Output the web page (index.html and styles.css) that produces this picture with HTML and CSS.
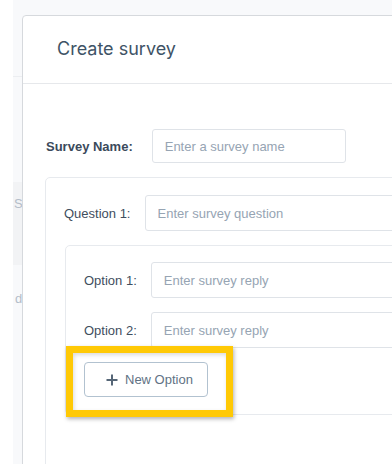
FILE: index.html
```html
<!DOCTYPE html>
<html lang="en">
<head>
    <meta charset="UTF-8">
    <meta name="viewport" content="width=device-width, initial-scale=1.0">
    <title>Create survey</title>
    <link rel="stylesheet" href="styles.css">
</head>
<body>
    <div class="page">
        <div class="page-top"></div>
        <div class="page-block">Surveys</div>
        <div class="page-text">dashboard</div>
    </div>

    <div class="modal">
        <div class="modal-header">
            <h2 class="modal-title">Create survey</h2>
        </div>
        <div class="modal-body">
            <div class="field-row">
                <label class="label-strong" for="surveyName">Survey Name:</label>
                <input type="text" id="surveyName" class="form-control name-input" placeholder="Enter a survey name">
            </div>

            <div class="card question-card">
                <div class="field-row">
                    <label class="label" for="question1">Question 1:</label>
                    <input type="text" id="question1" class="form-control" placeholder="Enter survey question">
                </div>

                <div class="card options-card">
                    <div class="field-row">
                        <label class="label" for="option1">Option 1:</label>
                        <input type="text" id="option1" class="form-control" placeholder="Enter survey reply">
                    </div>
                    <div class="field-row">
                        <label class="label" for="option2">Option 2:</label>
                        <input type="text" id="option2" class="form-control" placeholder="Enter survey reply">
                    </div>
                    <div class="btn-wrap">
                        <button class="btn btn-outline" type="button">
                            <svg class="plus" width="12" height="12" viewBox="0 0 12 12">
                                <path d="M6 0.5v11M0.5 6h11" stroke="currentColor" stroke-width="2" fill="none"/>
                            </svg>
                            New Option
                        </button>
                        <div class="highlight"></div>
                    </div>
                </div>
            </div>
        </div>
    </div>
</body>
</html>
```

FILE: styles.css
```css
* {
    margin: 0;
    padding: 0;
    box-sizing: border-box;
    font-family: 'Liberation Sans', Arial, sans-serif;
}

body {
    background: #ffffff;
    height: 464px;
    overflow: hidden;
}

.page {
    margin-left: 13px;
    height: 464px;
    background: #f8f9fb;
    color: #b4bdc9;
    font-size: 13px;
}

.page-top {
    height: 77px;
    border-bottom: 1px solid #eceef1;
}

.page-block {
    margin-top: 105px;
    height: 83px;
    padding: 14px 0 0 1px;
    background: #f2f3f5;
}

.page-text {
    padding: 26px 0 0 2px;
}

.modal {
    position: fixed;
    top: 15px;
    left: 22px;
    width: 560px;
    height: 560px;
    background: white;
    border: 1px solid #d6d9dd;
    border-radius: 4px;
}

.modal-header {
    height: 68px;
    padding: 22px 0 0 34px;
    border-bottom: 1px solid #e6e8eb;
}

.modal-title {
    font-family: 'Inter', 'Open Sans', sans-serif;
    font-size: 18px;
    font-weight: 400;
    color: #3e5366;
}

.modal-body {
    padding: 45px 0 0 22px;
}

.field-row {
    display: flex;
    align-items: center;
    margin-bottom: 14px;
}

.label-strong {
    font-size: 13px;
    font-weight: bold;
    color: #3b4a5b;
    margin: 0 19px 0 1px;
}

.label {
    font-size: 13px;
    color: #3f4e5e;
    margin-right: 14px;
}

.form-control {
    flex: 1;
    height: 36px;
    padding: 0 12px;
    border: 1px solid #dfe3e8;
    border-radius: 3px;
    font-size: 13px;
    color: #333;
}

.form-control::placeholder {
    color: #96a4b3;
}

.name-input {
    flex: none;
    width: 194px;
    height: 34px;
}

.card {
    border: 1px solid #e7eaee;
    border-radius: 5px;
}

.question-card {
    margin-top: 2px;
    padding: 17px 0 120px 18px;
}

.options-card {
    margin-left: 1px;
    padding: 16px 0 17px 18px;
}

.btn-wrap {
    position: relative;
    width: 124px;
}

.btn {
    display: flex;
    align-items: center;
    gap: 7px;
    cursor: pointer;
    font-size: 13px;
}

.btn-outline {
    width: 124px;
    height: 35px;
    padding-left: 21px;
    background: white;
    border: 1px solid #b2c2d0;
    border-radius: 4px;
    color: #617284;
}

.plus {
    color: #566677;
}

.highlight {
    position: absolute;
    left: -18px;
    top: -16px;
    right: -25px;
    bottom: -20px;
    border: 7px solid #ffc905;
    box-shadow: 1px 2px 4px rgba(0, 0, 0, 0.3), inset 1px 2px 4px rgba(0, 0, 0, 0.15);
    pointer-events: none;
}
```
